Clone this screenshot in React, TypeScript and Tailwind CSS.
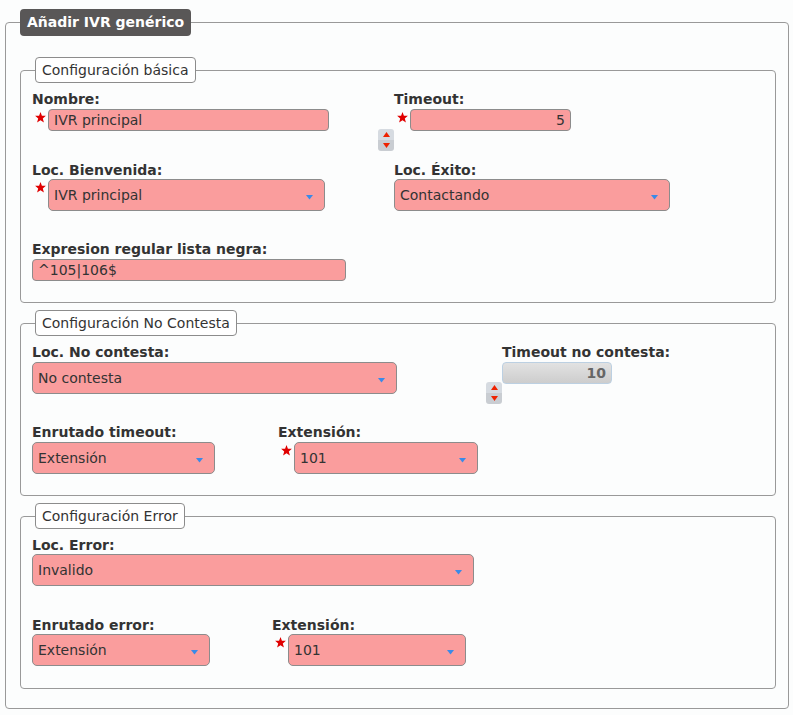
import React from "react";

function Star() {
  return (
    <div className="w-[16px] shrink-0 pl-[3px] pt-[3px]">
      <svg width="11" height="11" viewBox="0 0 10 10">
        <polygon
          points="5,0 6.3,3.3 9.9,3.5 7.1,5.8 8.1,9.5 5,7.4 1.9,9.5 2.9,5.8 0.1,3.5 3.7,3.3"
          fill="#e00000"
        />
      </svg>
    </div>
  );
}

function Label({ children }: { children: React.ReactNode }) {
  return (
    <div className="h-[16px] leading-[16px] font-bold text-[14px] text-[#333] whitespace-nowrap">
      {children}
    </div>
  );
}

function TextInput({
  value,
  width,
  right,
}: {
  value: string;
  width: string;
  right?: boolean;
}) {
  return (
    <div
      className={`${width} h-[22px] leading-[20px] border border-[#8c8c8c] rounded-[4px] bg-[#fa9d9d] text-[14px] text-[#333] px-[5px] ${right ? "text-right" : ""}`}
    >
      {value}
    </div>
  );
}

function Select({ value, width }: { value: string; width: string }) {
  return (
    <div
      className={`${width} h-[32px] border border-[#8c8c8c] rounded-[5px] bg-[#fa9d9d] text-[14px] text-[#333] pl-[5px] pr-[11px] flex items-center justify-between`}
    >
      <span>{value}</span>
      <svg width="7" height="5" viewBox="0 0 7 5" className="mt-[4px]">
        <polygon points="0,0 7,0 3.5,4.5" fill="#3a8ae8" />
      </svg>
    </div>
  );
}

function Spinner({ pos }: { pos: string }) {
  return (
    <div
      className={`absolute ${pos} w-[16px] h-[22px] rounded-[3px] overflow-hidden flex flex-col`}
    >
      <div className="h-[11px] bg-[#d6dbe1] flex items-center justify-center">
        <svg width="7" height="5" viewBox="0 0 7 5">
          <polygon points="3.5,0 7,5 0,5" fill="#ee2200" />
        </svg>
      </div>
      <div className="h-[11px] bg-[#c9cdd2] flex items-center justify-center">
        <svg width="7" height="5" viewBox="0 0 7 5">
          <polygon points="0,0 7,0 3.5,5" fill="#ee2200" />
        </svg>
      </div>
    </div>
  );
}

function Legend({ children }: { children: React.ReactNode }) {
  return (
    <legend className="ml-[3px] h-[26px] leading-[24px] border border-[#8c8c8c] rounded-[4px] bg-white px-[6px] text-[14px] text-[#333]">
      {children}
    </legend>
  );
}

export default function App() {
  return (
    <div className="min-h-[715px] bg-[#fcfdfd] pt-[9px] pl-[5px] pr-[4px] font-['DejaVu_Sans',sans-serif]">
      <fieldset className="border border-[#999] rounded-[4px] pl-[14px] pr-[12px] pt-[21px] pb-[19px]">
        <legend className="h-[27px] leading-[27px] px-[7px] rounded-[4px] bg-[#595757] text-white font-bold text-[14px]">
          Añadir IVR genérico
        </legend>

        {/* Configuración básica */}
        <fieldset className="border border-[#999] rounded-[4px] pl-[11px] pr-[10px] pt-[8px] pb-[21px]">
          <Legend>Configuración básica</Legend>
          <div className="flex">
            <div className="w-[362px]">
              <Label>Nombre:</Label>
              <div className="flex mt-[2px]">
                <Star />
                <TextInput value="IVR principal" width="w-[281px]" />
              </div>
            </div>
            <div className="relative">
              <Label>Timeout:</Label>
              <div className="flex mt-[2px]">
                <Star />
                <TextInput value="5" width="w-[161px]" right />
              </div>
              <Spinner pos="left-[-16px] top-[38px]" />
            </div>
          </div>
          <div className="flex mt-[31px]">
            <div className="w-[362px]">
              <Label>Loc. Bienvenida:</Label>
              <div className="flex mt-[1px]">
                <Star />
                <Select value="IVR principal" width="w-[277px]" />
              </div>
            </div>
            <div>
              <Label>Loc. Éxito:</Label>
              <div className="mt-[1px]">
                <Select value="Contactando" width="w-[276px]" />
              </div>
            </div>
          </div>
          <div className="mt-[30px]">
            <Label>Expresion regular lista negra:</Label>
            <div className="mt-[2px]">
              <TextInput value="^105|106$" width="w-[314px]" />
            </div>
          </div>
        </fieldset>

        {/* Configuración No Contesta */}
        <fieldset className="mt-[7px] border border-[#999] rounded-[4px] pl-[11px] pr-[10px] pt-[8px] pb-[21px]">
          <Legend>Configuración No Contesta</Legend>
          <div className="flex">
            <div className="w-[470px]">
              <Label>Loc. No contesta:</Label>
              <div className="mt-[2px]">
                <Select value="No contesta" width="w-[365px]" />
              </div>
            </div>
            <div className="relative">
              <Label>Timeout no contesta:</Label>
              <div className="mt-[2px] w-[110px] h-[22px] leading-[20px] border border-[#bcd0e2] rounded-[4px] bg-gradient-to-b from-[#e2e2e2] to-[#cdcdcd] text-right pr-[5px] text-[14px] font-bold text-[#666]">
                10
              </div>
              <Spinner pos="left-[-16px] top-[38px]" />
            </div>
          </div>
          <div className="flex mt-[30px]">
            <div className="w-[246px]">
              <Label>Enrutado timeout:</Label>
              <div className="mt-[2px]">
                <Select value="Extensión" width="w-[183px]" />
              </div>
            </div>
            <div>
              <Label>Extensión:</Label>
              <div className="flex mt-[2px]">
                <Star />
                <Select value="101" width="w-[184px]" />
              </div>
            </div>
          </div>
        </fieldset>

        {/* Configuración Error */}
        <fieldset className="mt-[7px] border border-[#999] rounded-[4px] pl-[11px] pr-[10px] pt-[8px] pb-[22px]">
          <Legend>Configuración Error</Legend>
          <div>
            <Label>Loc. Error:</Label>
            <div className="mt-[1px]">
              <Select value="Invalido" width="w-[442px]" />
            </div>
          </div>
          <div className="flex mt-[31px]">
            <div className="w-[240px]">
              <Label>Enrutado error:</Label>
              <div className="mt-[1px]">
                <Select value="Extensión" width="w-[178px]" />
              </div>
            </div>
            <div>
              <Label>Extensión:</Label>
              <div className="flex mt-[1px]">
                <Star />
                <Select value="101" width="w-[178px]" />
              </div>
            </div>
          </div>
        </fieldset>
      </fieldset>
    </div>
  );
}
